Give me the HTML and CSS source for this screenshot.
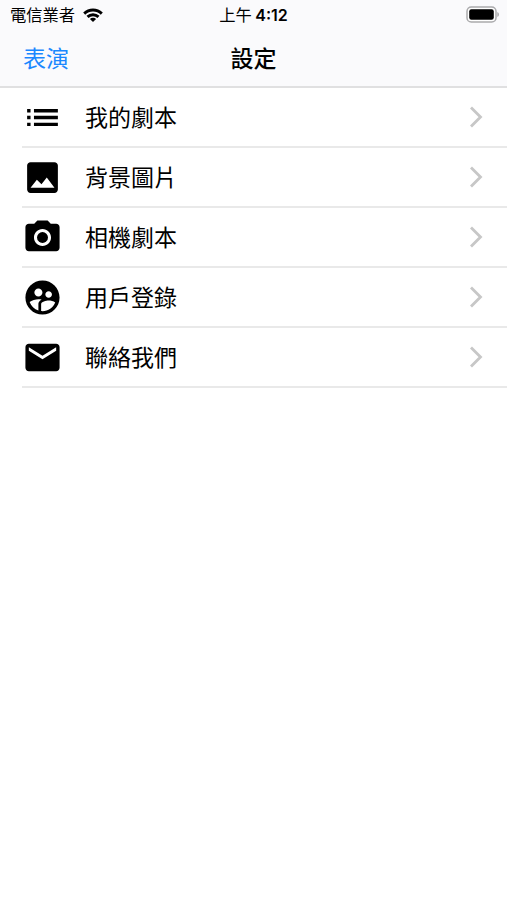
FILE: index.html
```html
<!DOCTYPE html>
<html lang="zh-Hant">
<head>
<meta charset="utf-8">
<title>設定</title>
<link rel="stylesheet" href="styles.css">
</head>
<body>
<header class="header">
  <div class="status">
    <div class="carrier">
      <span>電信業者</span>
      <svg class="wifi" viewBox="0 0 20 14" fill="none" stroke="#000" stroke-width="2.9"><path d="M1.2 5.6C6.2 .8 13.8 .8 18.8 5.6"/><path d="M4.5 8.9C7.6 6 12.4 6 15.5 8.9"/><path d="M10 14L6.9 10.9C8.7 9.3 11.3 9.3 13.1 10.9Z" fill="#000" stroke="none"/></svg>
    </div>
    <span class="time">上午 <b>4:12</b></span>
    <svg class="battery" viewBox="0 0 34 17"><rect x="1" y="1" width="29" height="15" rx="4.3" fill="#fff" stroke="#aaaaac" stroke-width="1.5"/><rect x="3.2" y="3.2" width="24.6" height="10.6" rx="2.2"/><path d="M31.3 6v5c2.2-.7 2.2-4.3 0-5z" fill="#aaaaac"/></svg>
  </div>
  <nav class="nav">
    <a class="back">表演</a>
    <h1 class="title">設定</h1>
  </nav>
</header>
<main class="list">
  <div class="row">
    <svg class="icon" viewBox="0 0 24 24"><path d="M3 13h2v-2H3v2zm0 4h2v-2H3v2zm0-8h2V7H3v2zm4 4h14v-2H7v2zm0 4h14v-2H7v2zM7 7v2h14V7H7z"/></svg>
    <span class="label">我的劇本</span>
    <svg class="chevron" viewBox="0 0 14 22"><path d="M2 1.5L11.5 11L2 20.5"/></svg>
  </div>
  <div class="row">
    <svg class="icon" viewBox="0 0 24 24"><path d="M21 19V5c0-1.1-.9-2-2-2H5c-1.1 0-2 .9-2 2v14c0 1.1.9 2 2 2h14c1.1 0 2-.9 2-2zM8.7 13.3l2.7 2.7L14.5 12l4.5 6H5l3.7-4.7z"/></svg>
    <span class="label">背景圖片</span>
    <svg class="chevron" viewBox="0 0 14 22"><path d="M2 1.5L11.5 11L2 20.5"/></svg>
  </div>
  <div class="row">
    <svg class="icon" viewBox="0 0 24 24"><circle cx="12" cy="12" r="3.2"/><path d="M9 2L7.17 4H4c-1.1 0-2 .9-2 2v12c0 1.1.9 2 2 2h16c1.1 0 2-.9 2-2V6c0-1.1-.9-2-2-2h-3.17L15 2H9zm3 15c-2.76 0-5-2.24-5-5s2.240-5 5-5 5 2.240 5 5-2.240 5-5 5z"/></svg>
    <span class="label">相機劇本</span>
    <svg class="chevron" viewBox="0 0 14 22"><path d="M2 1.5L11.5 11L2 20.5"/></svg>
  </div>
  <div class="row">
    <svg class="icon" viewBox="0 0 24 24"><path d="M11.99 2c-5.52 0-10 4.480-10 10s4.480 10 10 10 10-4.480 10-10-4.480-10-10-10zm3.610 6.340c1.070 0 1.930.86 1.930 1.930 0 1.070-.86 1.930-1.930 1.930-1.070 0-1.930-.86-1.930-1.930-.01-1.070.86-1.930 1.930-1.930zm-6-1.580c1.300 0 2.360 1.060 2.360 2.360 0 1.300-1.060 2.360-2.360 2.360s-2.360-1.060-2.360-2.360c0-1.310 1.050-2.360 2.360-2.360zm0 9.130v3.750c-2.400-.75-4.300-2.600-5.140-4.960 1.050-1.120 3.670-1.690 5.140-1.690.53 0 1.200.08 1.900.22-1.640.87-1.900 2.020-1.900 2.680zM11.99 20c-.27 0-.53-.01-.79-.04v-4.070c0-1.420 2.940-2.130 4.400-2.130 1.070 0 2.920.39 3.840 1.150-1.170 2.970-4.060 5.090-7.450 5.090z"/></svg>
    <span class="label">用戶登錄</span>
    <svg class="chevron" viewBox="0 0 14 22"><path d="M2 1.5L11.5 11L2 20.5"/></svg>
  </div>
  <div class="row">
    <svg class="icon" viewBox="0 0 24 24"><path d="M20 4H4c-1.1 0-1.990.9-1.990 2L2 18c0 1.1.9 2 2 2h16c1.1 0 2-.9 2-2V6c0-1.1-.9-2-2-2zm0 4l-8 5-8-5V6l8 5 8-5v2z"/></svg>
    <span class="label">聯絡我們</span>
    <svg class="chevron" viewBox="0 0 14 22"><path d="M2 1.5L11.5 11L2 20.5"/></svg>
  </div>
</main>
</body>
</html>
```
FILE: styles.css
```css
* { box-sizing: border-box; }
body {
  margin: 0;
  min-height: 900px;
  background: #fff;
  color: #000;
  font-family: Inter, "Noto Sans CJK TC", sans-serif;
}
.header {
  height: 88px;
  background: #fafafc;
  border-bottom: 2px solid #e0e0e1;
}
.status {
  display: grid;
  grid-template-columns: 1fr auto 1fr;
  align-items: center;
  height: 29px;
  padding: 0 7px 0 10px;
  font-size: 16.3px;
  line-height: 29px;
}
.carrier { display: flex; align-items: center; gap: 7.5px; }
.carrier span { padding-top: 2px; line-height: 27px; }
.wifi { width: 20px; height: 14px; }
.time { white-space: nowrap; padding-top: 2px; line-height: 27px; margin-right: 3px; }
.time b { font-weight: 600; font-size: 16px; margin-left: -1px; }
.battery { width: 34px; height: 17px; justify-self: end; }
.nav {
  display: grid;
  grid-template-columns: 1fr auto 1fr;
  align-items: center;
  height: 55px;
  padding: 0 23px;
  font-size: 23px;
}
.back { color: #1a88ff; }
.title { margin: 0; font-size: 23px; font-weight: 500; }
.row {
  display: flex;
  align-items: center;
  height: 60px;
  margin-left: 22px;
  padding-right: 24px;
  border-bottom: 2px solid #e9e9e9;
}
.icon { width: 41px; height: 41px; flex: none; }
.label { flex: 1; margin-left: 22px; padding-top: 2px; font-size: 23px; line-height: 34px; }
.chevron { width: 14px; height: 22px; fill: none; stroke: #c7c7c7; stroke-width: 2.8; }
```
